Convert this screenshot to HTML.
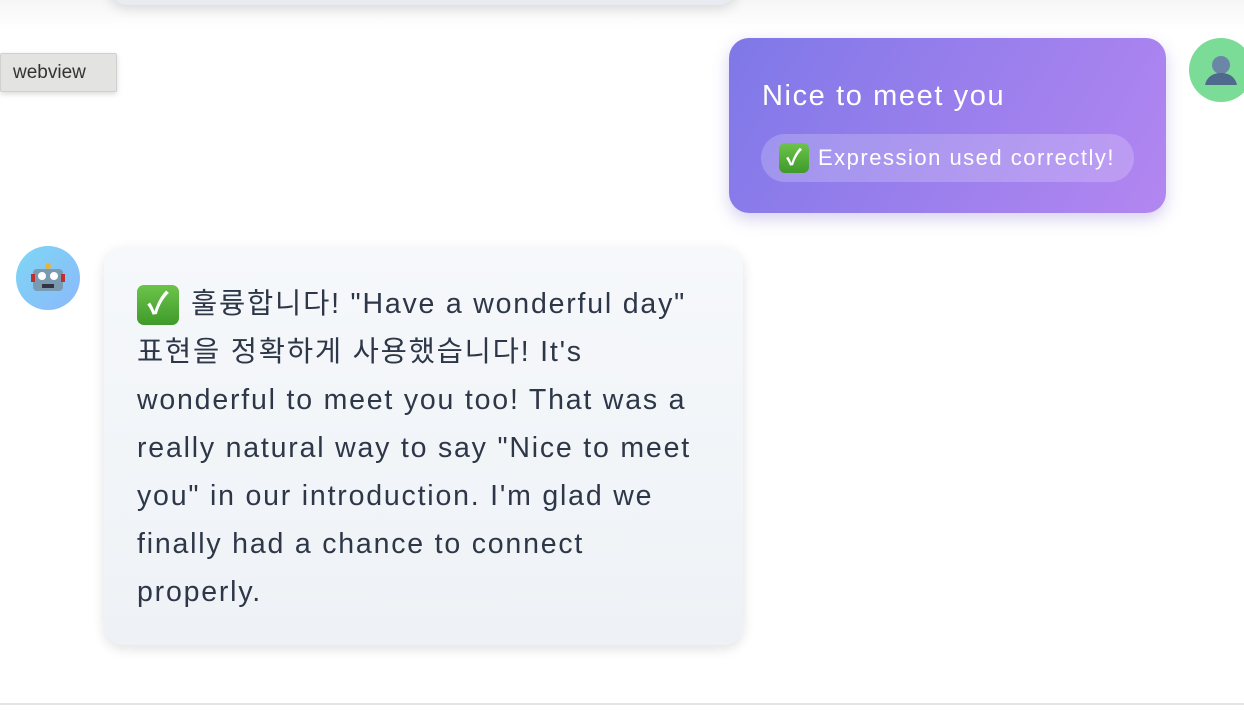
<!DOCTYPE html>
<html><head><meta charset="utf-8"><style>
*{margin:0;padding:0;box-sizing:border-box}
body{width:1244px;height:712px;background:#fff;position:relative;overflow:hidden;font-family:"Liberation Sans","Noto Sans CJK KR",sans-serif}
.top{position:absolute;left:108px;top:-40px;width:630px;height:45px;background:#e8ecf0;border-radius:20px;box-shadow:0 4px 12px rgba(0,0,0,.12)}
.fade{position:absolute;left:0;top:0;width:1244px;height:30px;background:linear-gradient(#f6f6f6,#fff)}
.wv{position:absolute;left:0;top:53px;width:117px;height:39px;background:#e3e3e1;border:1px solid #d0d0ce;border-radius:2px;box-shadow:0 2px 6px rgba(0,0,0,.15);font-size:19px;color:#333;line-height:37px;padding-left:12px}
.ub{position:absolute;left:729px;top:38px;width:437px;height:175px;border-radius:20px;background:linear-gradient(120deg,#7f78e8,#b386f1);box-shadow:0 6px 16px rgba(120,100,200,.3);color:#fff}
.ub .t{position:absolute;left:33px;top:44px;font-size:29px;line-height:1;letter-spacing:1.6px;white-space:nowrap}
.pill{position:absolute;left:32px;top:96px;width:373px;height:48px;border-radius:24px;background:rgba(255,255,255,.2);font-size:22px;line-height:48px;padding-left:18px;white-space:nowrap;letter-spacing:1.5px}
.chk{display:inline-block;border-radius:6px;background:linear-gradient(#6cc44a,#3f9a2a);color:#fff;text-align:center;font-weight:bold;letter-spacing:0}
.pill .chk{width:30px;height:30px;font-size:22px;line-height:30px;vertical-align:0;margin-right:9px}
.av{position:absolute;width:64px;height:64px;border-radius:50%}
.bb{position:absolute;left:104px;top:247px;width:639px;height:398px;border-radius:20px;background:linear-gradient(#f6f8fb,#eef2f6);box-shadow:0 4px 12px rgba(0,0,0,.12);color:#2d3748;font-size:28.5px;line-height:48px;padding:33px 33px;white-space:nowrap;letter-spacing:1.8px}
.bb .chk{width:42px;height:40px;font-size:30px;line-height:40px;border-radius:7px;margin-right:12px;vertical-align:-1px}
.line{position:absolute;left:0;top:703px;width:1244px;height:2px;background:#e5e5e5}
</style></head><body>
<div class="fade"></div>
<div class="top"></div>
<div class="wv">webview</div>
<div class="ub"><div class="t">Nice to meet you</div><div class="pill"><span class="chk">✓</span>Expression used correctly!</div></div>
<div class="av" style="left:1189px;top:38px;background:#7adc96">
<svg width="64" height="64" viewBox="0 0 64 64"><circle cx="32" cy="27" r="9" fill="#6c86a8"/><path d="M16 47c2-9 9-12 16-12s14 3 16 12z" fill="#4f6a8c"/></svg></div>
<div class="av" style="left:16px;top:246px;background:linear-gradient(135deg,#7dd7f5,#8cb8fb)">
<svg width="64" height="64" viewBox="0 0 64 64"><circle cx="32" cy="20" r="3" fill="#f0b030"/><rect x="17" y="23" width="30" height="22" rx="4" fill="#7a9ab0"/><rect x="15" y="28" width="4" height="8" fill="#c03030"/><rect x="45" y="28" width="4" height="8" fill="#c03030"/><circle cx="26" cy="30" r="4" fill="#fff"/><circle cx="38" cy="30" r="4" fill="#fff"/><rect x="26" y="38" width="12" height="4" fill="#334"/></svg></div>
<div class="bb"><span class="chk">✓</span>훌륭합니다! "Have a wonderful day"<br>표현을 정확하게 사용했습니다! It's<br>wonderful to meet you too! That was a<br>really natural way to say "Nice to meet<br>you" in our introduction. I'm glad we<br>finally had a chance to connect<br>properly.</div>
<div class="line"></div>
</body></html>
